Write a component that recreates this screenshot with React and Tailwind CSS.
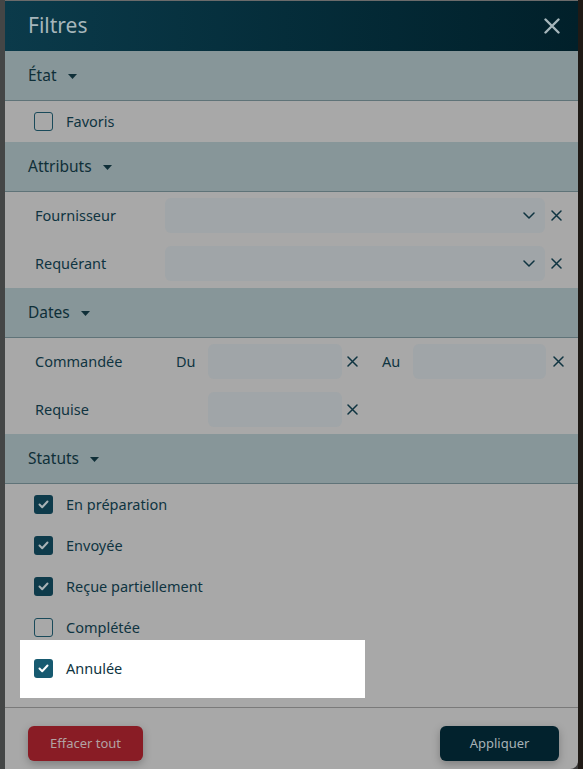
import React from 'react';

const font = { fontFamily: '"Noto Sans", "Open Sans", sans-serif' };

const Caret = () => (
  <svg width="9" height="5" viewBox="0 0 9 5" className="ml-[11px] mt-[1px]">
    <path d="M0 0 L9 0 L4.5 5 Z" fill="#0f2f38" />
  </svg>
);

const SmallX = ({ className = '' }) => (
  <svg width="11" height="11" viewBox="0 0 11 11" className={`shrink-0 ${className}`}>
    <path d="M1 1 L10 10 M10 1 L1 10" stroke="#0f3441" strokeWidth="1.5" strokeLinecap="round" />
  </svg>
);

const Chevron = () => (
  <svg width="12" height="7" viewBox="0 0 12 7" className="mr-[10px]">
    <path d="M1 1 L6 6 L11 1" stroke="#0f3441" strokeWidth="1.5" fill="none" strokeLinecap="round" strokeLinejoin="round" />
  </svg>
);

const SectionHeader = ({ title }) => (
  <div className="h-[50px] shrink-0 flex items-center pl-[23px] bg-[#879699] border-b border-[#5f7378] text-[15.5px] text-[#0f2f38]">
    <span>{title}</span>
    <Caret />
  </div>
);

const Checkbox = ({ checked, bright }) =>
  checked ? (
    <div className={`w-[19px] h-[19px] rounded-[3px] flex items-center justify-center ${bright ? 'bg-[#175a70]' : 'bg-[#0e3b4b]'}`}>
      <svg width="11" height="9" viewBox="0 0 11 9">
        <path d="M1.5 4.5 L4.2 7.2 L9.5 1.5" stroke={bright ? '#ffffff' : '#a9b3b7'} strokeWidth="2" fill="none" strokeLinecap="round" strokeLinejoin="round" />
      </svg>
    </div>
  ) : (
    <div className="w-[19px] h-[19px] rounded-[3px] border-[1.5px] border-[#1a4a5a]" />
  );

const CheckRow = ({ label, checked, bright }) => (
  <div className="h-[41px] flex items-center pl-[29px] gap-[13px] text-[14.5px] text-[#0f3441]">
    <Checkbox checked={checked} bright={bright} />
    <span>{label}</span>
  </div>
);

const Select = () => (
  <div className="flex-1 h-[35px] rounded-[6px] bg-[#a0a5a8] flex items-center justify-end">
    <Chevron />
  </div>
);

export default function App() {
  const statuses = [
    { label: 'En préparation', checked: true },
    { label: 'Envoyée', checked: true },
    { label: 'Reçue partiellement', checked: true },
    { label: 'Complétée', checked: false },
  ];

  return (
    <div className="w-[583px] h-[769px] bg-[#3e3e3e] flex overflow-hidden" style={font}>
      <div className="w-[5px] bg-[#444646]" />
      <div className="w-[573px] h-[769px] bg-[#a8a8a8] flex flex-col rounded-br-[8px] overflow-hidden border-t border-[#6b6b6b]">
        <div className="h-[50px] shrink-0 flex items-center justify-between pl-[23px] pr-[18px] bg-gradient-to-r from-[#0b3a4a] to-[#01202a]">
          <span className="text-[21px] text-[#a6b6bb]">Filtres</span>
          <svg width="16" height="16" viewBox="0 0 16 16">
            <path d="M1.5 1.5 L14.5 14.5 M14.5 1.5 L1.5 14.5" stroke="#a6b6bb" strokeWidth="2.4" strokeLinecap="round" />
          </svg>
        </div>

        <SectionHeader title="État" />
        <CheckRow label="Favoris" checked={false} />

        <SectionHeader title="Attributs" />
        <div className="flex flex-col gap-[13px] pt-[6px] pb-[7px] pl-[30px] pr-[16px] text-[14.5px] text-[#0f3441]">
          <div className="flex items-center">
            <span className="w-[130px]">Fournisseur</span>
            <Select />
            <SmallX className="ml-[6px]" />
          </div>
          <div className="flex items-center">
            <span className="w-[130px]">Requérant</span>
            <Select />
            <SmallX className="ml-[6px]" />
          </div>
        </div>

        <SectionHeader title="Dates" />
        <div className="flex flex-col gap-[13px] pt-[6px] pb-[7px] pl-[30px] pr-[12px] text-[14.5px] text-[#0f3441]">
          <div className="flex items-center">
            <span className="w-[141px] shrink-0">Commandée</span>
            <span className="w-[32px] shrink-0">Du</span>
            <div className="w-[134px] shrink-0 h-[35px] rounded-[6px] bg-[#a0a5a8]" />
            <SmallX className="ml-[5px]" />
            <span className="ml-[24px] w-[31px] shrink-0">Au</span>
            <div className="w-[133px] shrink-0 h-[35px] rounded-[6px] bg-[#a0a5a8]" />
            <SmallX className="ml-[7px]" />
          </div>
          <div className="flex items-center">
            <span className="w-[173px] shrink-0">Requise</span>
            <div className="w-[134px] shrink-0 h-[35px] rounded-[6px] bg-[#a0a5a8]" />
            <SmallX className="ml-[5px]" />
          </div>
        </div>

        <SectionHeader title="Statuts" />
        <div className="flex flex-col pb-[18px]">
          {statuses.map((s) => (
            <CheckRow key={s.label} label={s.label} checked={s.checked} />
          ))}
          <div className="relative">
            <div className="absolute left-[15px] top-[-8px] w-[345px] h-[58px] bg-white" />
            <div className="relative">
              <CheckRow label="Annulée" checked bright />
            </div>
          </div>
        </div>

        <div className="border-t border-[#7a7a7a] flex-1 flex items-start justify-between pt-[18px] pl-[23px] pr-[19px]">
          <button className="h-[35px] w-[115px] rounded-[6px] bg-[#891c25] text-[13px] text-[#b2a2a3] shadow-[0_3px_8px_rgba(0,0,0,0.25)]">
            Effacer tout
          </button>
          <button className="h-[35px] w-[119px] rounded-[6px] bg-[#02222d] text-[13px] text-[#a7b2b6] shadow-[0_3px_8px_rgba(0,0,0,0.25)]">
            Appliquer
          </button>
        </div>
      </div>
      <div className="w-[5px] bg-[#1f1a16]" />
    </div>
  );
}
